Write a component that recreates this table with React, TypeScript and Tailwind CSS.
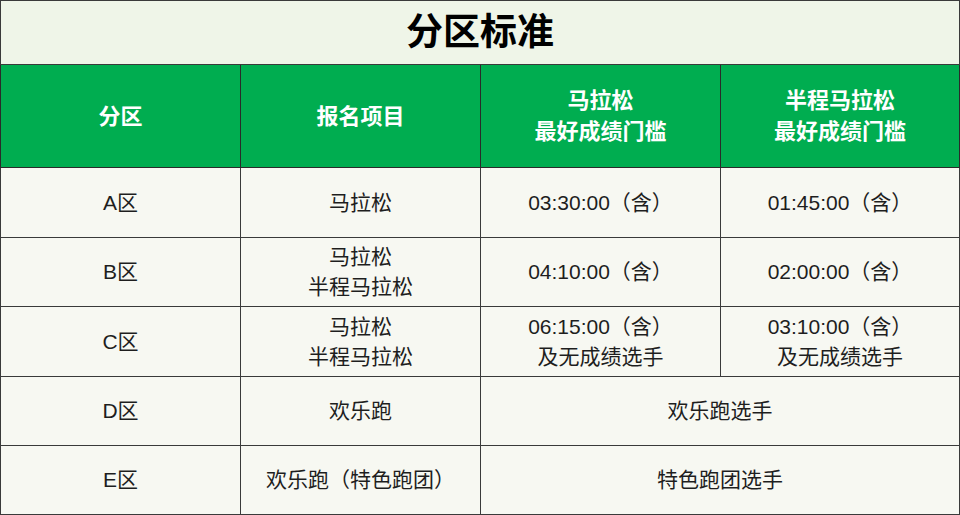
import React from "react";

type Row = { zone: string; items: string[]; full?: string[]; half?: string[]; merged?: string };

const rows: Row[] = [
  { zone: "A区", items: ["马拉松"], full: ["03:30:00（含）"], half: ["01:45:00（含）"] },
  { zone: "B区", items: ["马拉松", "半程马拉松"], full: ["04:10:00（含）"], half: ["02:00:00（含）"] },
  {
    zone: "C区",
    items: ["马拉松", "半程马拉松"],
    full: ["06:15:00（含）", "及无成绩选手"],
    half: ["03:10:00（含）", "及无成绩选手"],
  },
  { zone: "D区", items: ["欢乐跑"], merged: "欢乐跑选手" },
  { zone: "E区", items: ["欢乐跑（特色跑团）"], merged: "特色跑团选手" },
];

const rowHeights = ["h-[70px]", "h-[69px]", "h-[70px]", "h-[69px]", "h-[69px]"];

function Lines({ lines }: { lines: string[] }) {
  return (
    <>
      {lines.map((l, i) => (
        <div key={i}>{l}</div>
      ))}
    </>
  );
}

export default function App() {
  return (
    <div
      className="w-[960px] h-[515px] bg-white"
      style={{ fontFamily: '"Liberation Sans", "Noto Sans CJK SC", sans-serif' }}
    >
      <table className="w-[959px] border-collapse table-fixed text-[#1e1e1e]">
        <colgroup>
          <col className="w-[240px]" />
          <col className="w-[240px]" />
          <col className="w-[240px]" />
          <col className="w-[239px]" />
        </colgroup>
        <tbody>
          <tr className="h-[64px] bg-[#eff5e8]">
            <td colSpan={4} className="border border-[#3a3a3a] text-center text-[37px] font-bold leading-none text-black">
              分区标准
            </td>
          </tr>
          <tr className="h-[103px] bg-[#00ad50] text-white font-bold text-[22px] leading-[31px]">
            <td className="border border-[#2a2a2a] text-center">分区</td>
            <td className="border border-[#2a2a2a] text-center">报名项目</td>
            <td className="border border-[#2a2a2a] text-center">
              <div>马拉松</div>
              <div>最好成绩门槛</div>
            </td>
            <td className="border border-[#2a2a2a] text-center">
              <div>半程马拉松</div>
              <div>最好成绩门槛</div>
            </td>
          </tr>
          {rows.map((r, i) => (
            <tr key={r.zone} className={`${rowHeights[i]} bg-[#f7f8f2] text-[21px] leading-[30px]`}>
              <td className="border border-[#3a3a3a] text-center">{r.zone}</td>
              <td className="border border-[#3a3a3a] text-center">
                <Lines lines={r.items} />
              </td>
              {r.merged ? (
                <td colSpan={2} className="border border-[#3a3a3a] text-center">
                  {r.merged}
                </td>
              ) : (
                <>
                  <td className="border border-[#3a3a3a] text-center">
                    <Lines lines={r.full ?? []} />
                  </td>
                  <td className="border border-[#3a3a3a] text-center">
                    <Lines lines={r.half ?? []} />
                  </td>
                </>
              )}
            </tr>
          ))}
        </tbody>
      </table>
    </div>
  );
}
